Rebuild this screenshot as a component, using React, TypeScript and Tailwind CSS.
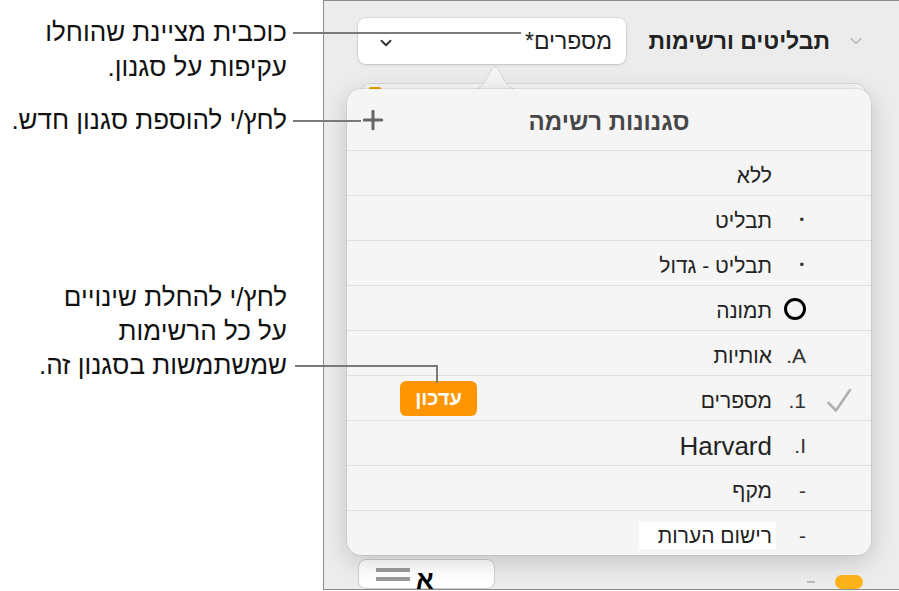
import { ChevronDown, Plus } from "lucide-react";

type Row = {
  label: string;
  marker: "none" | "dot" | "circle" | "text";
  markerText?: string;
  checked?: boolean;
  update?: boolean;
  latin?: boolean;
  highlight?: boolean;
};

const rows: Row[] = [
  { label: "ללא", marker: "none" },
  { label: "תבליט", marker: "dot" },
  { label: "תבליט - גדול", marker: "dot" },
  { label: "תמונה", marker: "circle" },
  { label: "אותיות", marker: "text", markerText: ".A" },
  { label: "מספרים", marker: "text", markerText: ".1", checked: true, update: true },
  { label: "Harvard", marker: "text", markerText: ".I", latin: true },
  { label: "מקף", marker: "text", markerText: "-" },
  { label: "רישום הערות", marker: "text", markerText: "-", highlight: true },
];

function Marker({ row }: { row: Row }) {
  if (row.marker === "dot") return <span className="text-[13px] text-[#333] mr-[2px] mt-[4px]">•</span>;
  if (row.marker === "circle") return <span className="w-[22px] h-[22px] rounded-full border-[3px] border-black mt-[2px]" />;
  if (row.marker === "text") return <span dir="ltr" className="text-[21px] text-[#333] mt-[6px]">{row.markerText}</span>;
  return null;
}

function StyleRow({ row }: { row: Row }) {
  return (
    <div dir="rtl" className="flex items-center h-[45px] border-t-[1.5px] border-[#dedede]">
      <div className="w-[65px] flex justify-center mt-[4px]">
        {row.checked && (
          <svg width="26" height="26" viewBox="0 0 26 26" fill="none">
            <path d="M2.5 16 L10 23.5 L24 3" stroke="#b0b0b0" strokeWidth="2.6" strokeLinecap="round" strokeLinejoin="round" />
          </svg>
        )}
      </div>
      <div className="w-[26px] flex justify-start items-center">
        <Marker row={row} />
      </div>
      <div className="mr-[8px] mt-[6px]">
        <span
          className={
            row.latin
              ? "text-[26px] text-[#222]"
              : row.highlight
              ? "text-[21px] text-[#222] bg-white pl-[19px] pr-[4px] -mr-[4px] py-[2px]"
              : "text-[21px] text-[#222]"
          }
        >
          {row.label}
        </span>
      </div>
      {row.update && (
        <button className="ms-auto ml-[53px] w-[77px] h-[35px] rounded-[6px] bg-[#ff9500] text-white text-[20px] font-semibold">
          עדכון
        </button>
      )}
    </div>
  );
}

function App() {
  return (
    <div className="relative w-[899px] h-[591px] bg-white flex overflow-hidden font-['Liberation_Sans','Noto_Sans',sans-serif]">
      {/* callouts */}
      <div dir="rtl" className="w-[323px] flex flex-col pr-[36px] text-[26px] text-[#111]">
        <div className="pt-[15px] leading-[35px]">
          <p>כוכבית מציינת שהוחלו</p>
          <p>עקיפות על סגנון.</p>
        </div>
        <div className="mt-[18px] leading-[35px]">
          <p>לחץ/י להוספת סגנון חדש.</p>
        </div>
        <div className="mt-[142px] leading-[34px]">
          <p>לחץ/י להחלת שינויים</p>
          <p>על כל הרשימות</p>
          <p>שמשתמשות בסגנון זה.</p>
        </div>
      </div>

      {/* inspector panel */}
      <div className="flex-1 h-[590px] border-l border-t border-b border-[#8c8c8c] bg-[#ececec] flex flex-col">
        <div className="flex items-center justify-between h-[46px] mt-[17px] pl-[34px] pr-[33px]">
          <div className="w-[268px] h-[46px] bg-white rounded-[8px] shadow-[0_0_0_0.5px_rgba(0,0,0,0.1),0_1px_3px_rgba(0,0,0,0.15)] flex items-center justify-between pl-[19px] pr-[14px]">
            <ChevronDown size={18} strokeWidth={2.5} className="text-[#333] mt-[4px]" />
            <span dir="rtl" className="text-[23px] text-[#222]">מספרים*</span>
          </div>
          <div dir="rtl" className="flex items-center gap-[16px]">
            <ChevronDown size={20} strokeWidth={1.5} className="text-[#b5b5b5]" />
            <span className="text-[23px] font-bold text-[#222]">תבליטים ורשימות</span>
          </div>
        </div>

        <div className="ml-[36px] mr-[33px] mt-[19px] h-[470px] rounded-[10px] bg-[#f7f7f7] border border-[#d8d8d8] relative">
          <div className="absolute left-[8px] top-[3px] w-[12px] h-[3px] rounded-full bg-[#f0a500]" />
        </div>

        <div className="flex items-start justify-between mt-[14px] pl-[34px] pr-[36px]">
          <div className="w-[137px] h-[30px] bg-white rounded-[8px] border border-[#cfcfcf] flex items-start gap-[6px] pl-[17px] pt-[7px]">
            <div className="flex flex-col gap-[5px] pt-[1px]">
              <div className="w-[34px] h-[4px] bg-[#9a9a9a]" />
              <div className="w-[34px] h-[4px] bg-[#9a9a9a]" />
            </div>
            <span className="text-[26px] font-bold text-black leading-none">א</span>
          </div>
          <div className="flex items-start gap-[20px] pt-[16px]">
            <div className="w-[8px] h-[2px] bg-[#bbb] mt-[6px]" />
            <div className="w-[28px] h-[14px] rounded-full bg-[#ffb31a]" />
          </div>
        </div>
      </div>

      {/* popover arrow */}
      <svg className="absolute left-[465px] top-[62px]" width="60" height="30" viewBox="0 0 60 30">
        <path d="M0 29 C12 29 16 26 22 16 L27 7 C29 4 31 4 33 7 L38 16 C44 26 48 29 60 29 Z" fill="#f5f5f5" stroke="#d0d0d0" strokeWidth="0.8" />
      </svg>

      {/* popover */}
      <div className="absolute left-[347px] top-[89px] w-[524px] h-[466px] bg-[#f5f5f5] rounded-[14px] shadow-[0_0_0_0.5px_rgba(0,0,0,0.12),0_6px_24px_rgba(0,0,0,0.18)] flex flex-col overflow-hidden">
        <div className="relative flex items-center justify-center h-[61px]">
          <Plus size={30} strokeWidth={2.4} className="absolute left-[11px] text-[#666]" />
          <div dir="rtl" className="pt-[4px] text-[24px] font-bold text-[#474747]">
            סגנונות רשימה
          </div>
        </div>
        {rows.map((row) => (
          <StyleRow key={row.label} row={row} />
        ))}
      </div>

      {/* callout lines */}
      <div className="absolute left-[293px] top-[32px] w-[228px] h-[1.5px] bg-[#7a7a7a]" />
      <div className="absolute left-[293px] top-[120px] w-[68px] h-[1.5px] bg-[#7a7a7a]" />
      <div className="absolute left-[295px] top-[365px] w-[143px] h-[1.5px] bg-[#7a7a7a]" />
      <div className="absolute left-[436px] top-[365px] w-[1.5px] h-[18px] bg-[#7a7a7a]" />
    </div>
  );
}

export default App;
